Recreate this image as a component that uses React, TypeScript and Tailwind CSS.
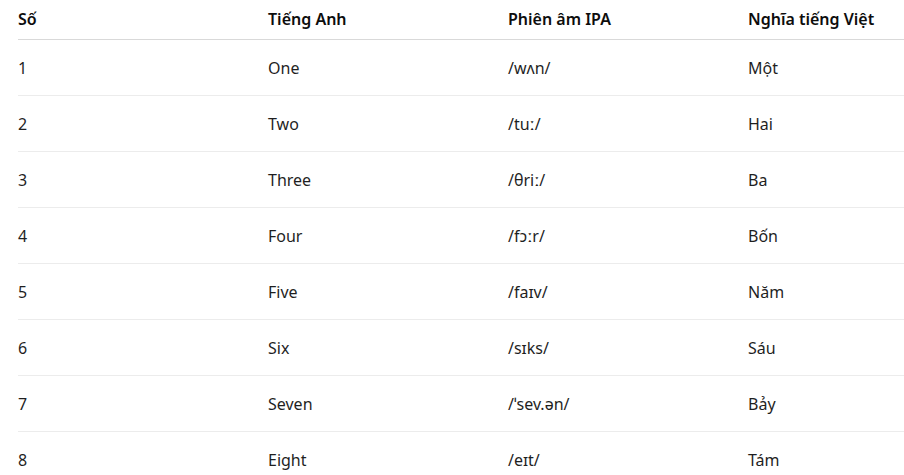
const rows = [
  ["1", "One", "/wʌn/", "Một"],
  ["2", "Two", "/tuː/", "Hai"],
  ["3", "Three", "/θriː/", "Ba"],
  ["4", "Four", "/fɔːr/", "Bốn"],
  ["5", "Five", "/faɪv/", "Năm"],
  ["6", "Six", "/sɪks/", "Sáu"],
  ["7", "Seven", "/ˈsev.ən/", "Bảy"],
  ["8", "Eight", "/eɪt/", "Tám"],
];

export default function App() {
  return (
    <div className="min-h-screen bg-white pl-[18px] font-['Noto_Sans',sans-serif] text-[16px] text-[#1f1f1f]">
      <table className="w-[886px] table-fixed border-collapse text-left">
        <colgroup>
          <col className="w-[250px]" />
          <col className="w-[240px]" />
          <col className="w-[240px]" />
          <col />
        </colgroup>
        <thead>
          <tr className="h-[39px] border-b border-[#d9d9d9]">
            <th className="p-0 pb-px font-semibold text-[#0d0d0d]">Số</th>
            <th className="p-0 pb-px font-semibold text-[#0d0d0d]">Tiếng Anh</th>
            <th className="p-0 pb-px font-semibold text-[#0d0d0d]">Phiên âm IPA</th>
            <th className="p-0 pb-px font-semibold text-[#0d0d0d]">Nghĩa tiếng Việt</th>
          </tr>
        </thead>
        <tbody>
          {rows.map((r) => (
            <tr key={r[0]} className="h-[56px] border-b border-[#ececec] last:border-b-0">
              {r.map((c, i) => (
                <td key={i} className="p-0 pt-px">
                  {c}
                </td>
              ))}
            </tr>
          ))}
        </tbody>
      </table>
    </div>
  );
}
